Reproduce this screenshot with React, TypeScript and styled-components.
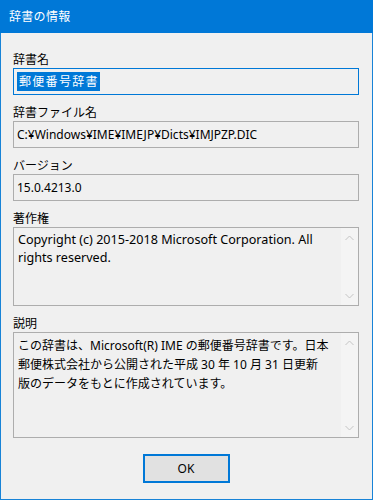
import React from "react";
import styled, { createGlobalStyle } from "styled-components";

const GlobalStyle = createGlobalStyle`
    html, body {
        margin: 0;
        padding: 0;
        background: #f0f0f0;
    }
    * {
        box-sizing: border-box;
    }
`;

const Window = styled.div`
    width: 373px;
    height: 500px;
    display: flex;
    flex-direction: column;
    font-family: "Noto Sans", "Noto Sans CJK JP", sans-serif;
    font-size: 12px;
    color: #000;
`;

const TitleBar = styled.div`
    height: 33px;
    flex-shrink: 0;
    background: #0078d7;
    color: #fff;
    display: flex;
    align-items: center;
    padding-left: 9px;
    padding-bottom: 1px;
    letter-spacing: 0.3px;
`;

const Body = styled.div`
    flex: 1;
    display: flex;
    flex-direction: column;
    background: #f0f0f0;
    border: 1px solid #1883d7;
    border-top: none;
    padding: 19px 13px 0 12px;
`;

const Field = styled.div`
    display: flex;
    flex-direction: column;
    margin-bottom: 10px;
`;

const Label = styled.div`
    line-height: 16px;
    height: 16px;
`;

const TextBox = styled.div<{ $focused?: boolean }>`
    height: 27px;
    display: flex;
    align-items: center;
    padding: 0 3px;
    border: 1px solid ${p => (p.$focused ? "#0078d7" : "#adadad")};
    background: #f0f0f0;
    white-space: nowrap;
    overflow: hidden;
`;

const Selected = styled.span`
    background: #0078d7;
    color: #fff;
    line-height: 19px;
    padding: 0 1px 0 2px;
    letter-spacing: 1.3px;
`;

const MultiBox = styled.div<{ $height: number }>`
    height: ${p => p.$height}px;
    display: flex;
    border: 1px solid #adadad;
    background: #f0f0f0;
`;

const MultiText = styled.div<{ $lineHeight: number; $size?: number }>`
    flex: 1;
    padding: 3px 4px;
    font-size: ${p => p.$size ?? 12}px;
    line-height: ${p => p.$lineHeight}px;
    white-space: pre-line;
`;

const ScrollColumn = styled.div`
    width: 17px;
    flex-shrink: 0;
    background: #f4f4f4;
    display: flex;
    flex-direction: column;
    justify-content: space-between;
    align-items: center;
    padding: 7px 0 6px;
`;

const Footer = styled.div`
    display: flex;
    justify-content: center;
    padding-top: 6px;
`;

const Button = styled.button`
    width: 87px;
    height: 29px;
    background: #e1e1e1;
    border: 2px solid #0078d7;
    font: inherit;
    color: #000;
    padding: 0;
`;

function Chevron({ up }: { up?: boolean }) {
    return (
        <svg width="9" height="6" viewBox="0 0 9 6">
            <polyline
                points={up ? "0.5,5 4.5,1 8.5,5" : "0.5,1 4.5,5 8.5,1"}
                fill="none"
                stroke="#c4c4c4"
                strokeWidth="1"
            />
        </svg>
    );
}

function Scroll() {
    return (
        <ScrollColumn>
            <Chevron up />
            <Chevron />
        </ScrollColumn>
    );
}

export default function App() {
    return (
        <>
            <GlobalStyle />
            <Window>
                <TitleBar>辞書の情報</TitleBar>
                <Body>
                    <Field>
                        <Label>辞書名</Label>
                        <TextBox $focused>
                            <Selected>郵便番号辞書</Selected>
                        </TextBox>
                    </Field>
                    <Field>
                        <Label>辞書ファイル名</Label>
                        <TextBox>C:¥Windows¥IME¥IMEJP¥Dicts¥IMJPZP.DIC</TextBox>
                    </Field>
                    <Field>
                        <Label>バージョン</Label>
                        <TextBox>15.0.4213.0</TextBox>
                    </Field>
                    <Field>
                        <Label>著作権</Label>
                        <MultiBox $height={79}>
                            <MultiText $lineHeight={18} $size={12.6}>
                                {"Copyright (c) 2015-2018 Microsoft Corporation. All\nrights reserved."}
                            </MultiText>
                            <Scroll />
                        </MultiBox>
                    </Field>
                    <Field>
                        <Label>説明</Label>
                        <MultiBox $height={106}>
                            <MultiText $lineHeight={19}>
                                {"この辞書は、Microsoft(R) IME の郵便番号辞書です。日本\n郵便株式会社から公開された平成 30 年 10 月 31 日更新\n版のデータをもとに作成されています。"}
                            </MultiText>
                            <Scroll />
                        </MultiBox>
                    </Field>
                    <Footer>
                        <Button>OK</Button>
                    </Footer>
                </Body>
            </Window>
        </>
    );
}
